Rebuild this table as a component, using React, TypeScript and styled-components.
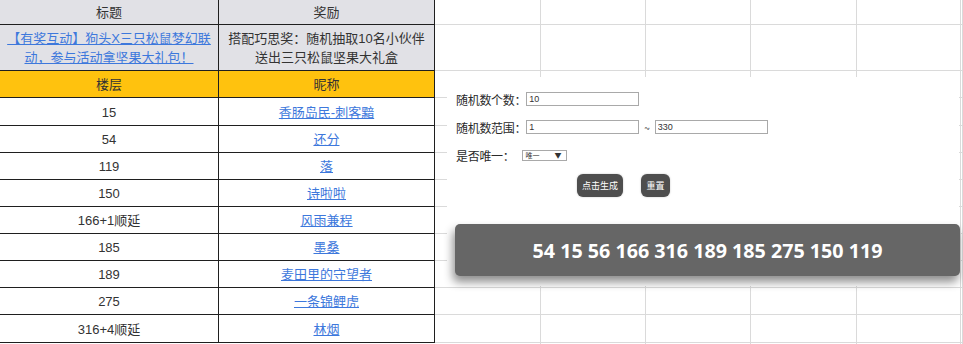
import { Fragment } from "react";
import styled, { createGlobalStyle } from "styled-components";

const GlobalStyle = createGlobalStyle`
  html, body {
    margin: 0;
    padding: 0;
    background: #ffffff;
    overflow: hidden;
  }
  * {
    box-sizing: border-box;
  }
`;

const Page = styled.div`
  display: flex;
  width: 963px;
  height: 344px;
  overflow: hidden;
  font-family: "Liberation Sans", "Noto Sans CJK SC", sans-serif;
`;

const PrizeTable = styled.div`
  display: grid;
  grid-template-columns: 219px 216px;
  flex: 0 0 435px;
  align-content: start;
`;

const Cell = styled.div<{ $h: number; $bg?: string }>`
  height: ${(p) => p.$h}px;
  display: flex;
  align-items: center;
  justify-content: center;
  text-align: center;
  border-right: 1px solid #1f1f1f;
  border-bottom: 1px solid #1f1f1f;
  background: ${(p) => p.$bg || "#ffffff"};
  color: #333333;
  font-size: 13px;
  line-height: 19px;
  white-space: nowrap;
  padding-top: 1px;
`;

const Link = styled.a`
  color: #3d78dc;
  text-decoration: underline;
  cursor: pointer;
`;

const Sheet = styled.div`
  position: relative;
  flex: 1;
  display: grid;
  grid-template-columns: 106px 105px 105px 106px 104px 1fr;
  grid-auto-rows: min-content;
  align-content: start;
`;

const SheetCell = styled.div<{ $h: number }>`
  height: ${(p) => p.$h}px;
  border-right: 1px solid #dadada;
  border-bottom: 1px solid #dadada;
`;

const Panel = styled.div`
  position: absolute;
  left: 12px;
  top: 77px;
  width: 512px;
  height: 209px;
  background: #ffffff;
  padding: 15px 0 0 9px;
  display: flex;
  flex-direction: column;
  font-family: "Noto Sans CJK SC", "Liberation Sans", sans-serif;
`;

const FormRow = styled.div<{ $mt?: number }>`
  display: flex;
  align-items: center;
  height: 14px;
  margin-top: ${(p) => p.$mt || 0}px;
`;

const Label = styled.span<{ $gap?: number }>`
  font-size: 12px;
  letter-spacing: -0.3px;
  color: #2a2a2a;
  margin-right: ${(p) => p.$gap || 0}px;
  white-space: nowrap;
`;

const TextInput = styled.input`
  width: 113px;
  height: 14px;
  border: 1px solid #a9a9a9;
  padding: 0 2px;
  font-size: 9px;
  font-family: "Liberation Sans", sans-serif;
  color: #333;
  outline: none;
  margin: 0;
`;

const Tilde = styled.span`
  font-size: 10px;
  color: #444;
  margin: 0 5px 0 5px;
`;

const SelectBox = styled.div`
  display: flex;
  align-items: center;
  justify-content: space-between;
  width: 45px;
  height: 11px;
  border: 1px solid #a9a9a9;
  padding: 0 4px 0 3px;
  font-size: 7px;
  color: #333;
`;

const Buttons = styled.div`
  display: flex;
  gap: 18px;
  margin-top: 12px;
  padding-left: 121px;
`;

const Btn = styled.button<{ $w: number }>`
  width: ${(p) => p.$w}px;
  height: 23px;
  border: none;
  border-radius: 6px;
  background: #4e4e4e;
  color: #ffffff;
  font-size: 9px;
  font-family: "Noto Sans CJK SC", sans-serif;
  padding: 0;
  box-shadow: 0 0 2px rgba(0, 0, 0, 0.25);
`;

const Result = styled.div`
  margin: 27px 0 0 -1px;
  width: 505px;
  height: 52px;
  border-radius: 5px;
  background: #666666;
  box-shadow: -2px 6px 10px rgba(0, 0, 0, 0.45);
  display: flex;
  align-items: center;
  justify-content: center;
  color: #ffffff;
  font-family: "Open Sans", sans-serif;
  font-weight: 700;
  font-size: 19.7px;
`;

const dataRows: [string, string][] = [
  ["15", "香肠岛民-刺客黯"],
  ["54", "还分"],
  ["119", "落"],
  ["150", "诗啦啦"],
  ["166+1顺延", "风雨兼程"],
  ["185", "墨桑"],
  ["189", "麦田里的守望者"],
  ["275", "一条锦鲤虎"],
  ["316+4顺延", "林烟"],
];

const dataHeights = [28, 27, 27, 27, 27, 27, 27, 27, 28];
const sheetHeights = [25, 46, 27, ...dataHeights, 20];
const GRAY = "#e1e1e6";
const YELLOW = "#ffc20e";

function App() {
  return (
    <>
      <GlobalStyle />
      <Page>
        <PrizeTable>
          <Cell $h={25} $bg={GRAY}>标题</Cell>
          <Cell $h={25} $bg={GRAY}>奖励</Cell>
          <Cell $h={46} $bg={GRAY}>
            <Link>
              【有奖互动】狗头X三只松鼠梦幻联
              <br />
              动，参与活动拿坚果大礼包！
            </Link>
          </Cell>
          <Cell $h={46} $bg={GRAY}>
            <span>
              搭配巧思奖：随机抽取10名小伙伴
              <br />
              送出三只松鼠坚果大礼盒
            </span>
          </Cell>
          <Cell $h={27} $bg={YELLOW}>楼层</Cell>
          <Cell $h={27} $bg={YELLOW}>昵称</Cell>
          {dataRows.map(([floor, name], i) => (
            <Fragment key={i}>
              <Cell $h={dataHeights[i]}>{floor}</Cell>
              <Cell $h={dataHeights[i]}>
                <Link>{name}</Link>
              </Cell>
            </Fragment>
          ))}
        </PrizeTable>

        <Sheet>
          {sheetHeights.map((h, r) =>
            [0, 1, 2, 3, 4, 5].map((c) => <SheetCell key={r + "-" + c} $h={h} />)
          )}

          <Panel>
            <FormRow>
              <Label>随机数个数：</Label>
              <TextInput defaultValue="10" />
            </FormRow>
            <FormRow $mt={14}>
              <Label>随机数范围：</Label>
              <TextInput defaultValue="1" />
              <Tilde>~</Tilde>
              <TextInput defaultValue="330" />
            </FormRow>
            <FormRow $mt={14}>
              <Label $gap={7}>是否唯一：</Label>
              <SelectBox>
                <span>唯一</span>
                <span>▼</span>
              </SelectBox>
            </FormRow>
            <Buttons>
              <Btn $w={46}>点击生成</Btn>
              <Btn $w={29}>重置</Btn>
            </Buttons>
            <Result>54 15 56 166 316 189 185 275 150 119</Result>
          </Panel>
        </Sheet>
      </Page>
    </>
  );
}

export default App;
